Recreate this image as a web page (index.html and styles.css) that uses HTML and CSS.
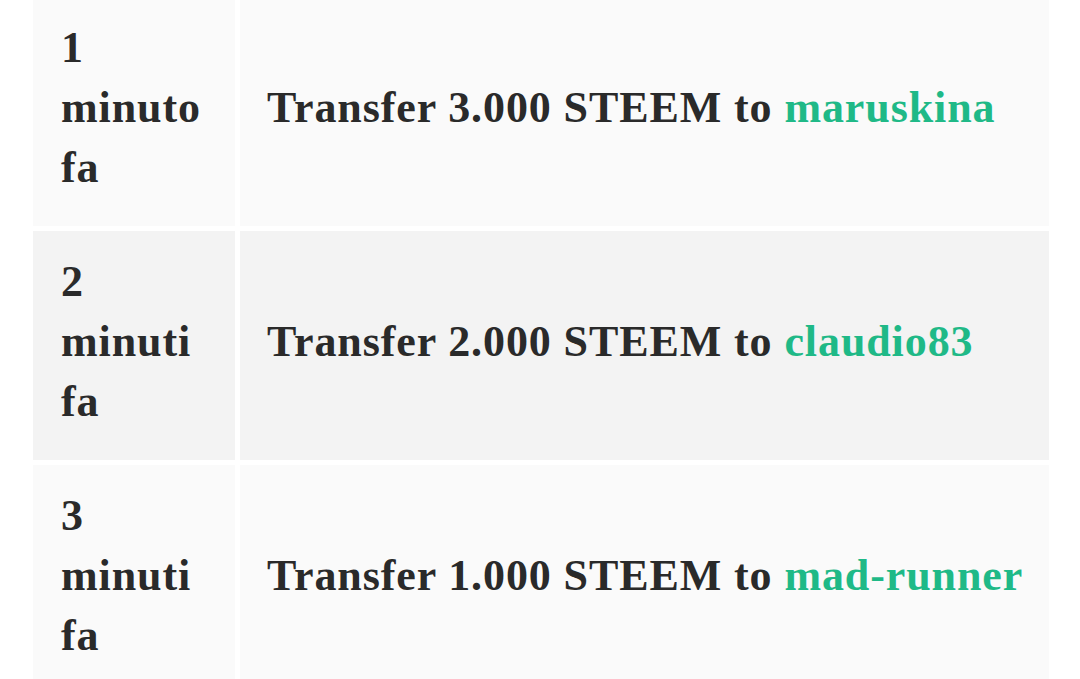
FILE: index.html
```html
<!DOCTYPE html>
<html>
<head>
<meta charset="utf-8">
<link rel="stylesheet" href="styles.css">
</head>
<body>
<table class="feed">
  <tbody>
    <tr class="row odd">
      <td class="time">1 minuto fa</td>
      <td class="desc">Transfer 3.000 STEEM to <a class="user" href="#">maruskina</a></td>
    </tr>
    <tr class="row even">
      <td class="time">2 minuti fa</td>
      <td class="desc">Transfer 2.000 STEEM to <a class="user" href="#">claudio83</a></td>
    </tr>
    <tr class="row odd">
      <td class="time">3 minuti fa</td>
      <td class="desc">Transfer 1.000 STEEM to <a class="user" href="#">mad-runner</a></td>
    </tr>
  </tbody>
</table>
</body>
</html>
```
FILE: styles.css
```css
html, body {
  margin: 0;
  padding: 0;
  background: #ffffff;
}
body {
  font-family: "Liberation Serif", "Times New Roman", serif;
  font-weight: bold;
  font-size: 44px;
  line-height: 60px;
  letter-spacing: 0.9px;
  color: #2a2a2a;
  overflow: hidden;
}
.feed {
  table-layout: fixed;
  border-collapse: separate;
  border-spacing: 5px;
  margin: -8px 26px 0 28px;
  width: 1026px;
}
.row.odd td {
  background: #fafafa;
}
.row.even td {
  background: #f3f3f3;
}
.time {
  width: 146px;
  padding: 21px 28px 28px 28px;
  vertical-align: middle;
}
.desc {
  padding: 21px 27px 28px 27px;
  vertical-align: middle;
  white-space: nowrap;
}
.user {
  color: #1fb987;
  text-decoration: none;
}
```
